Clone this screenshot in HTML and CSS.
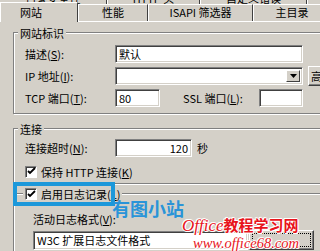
FILE: index.html
```html
<!DOCTYPE html>
<html lang="zh-CN">
<head>
  <meta charset="UTF-8" />
  <title>网站属性</title>
  <link rel="stylesheet" href="styles.css">
</head>
<body>
  <div class="dialog">
    <div class="tabs-back">
      <div class="btab btab-dir">目录安全性</div>
      <div class="btab btab-http">HTTP 头</div>
      <div class="btab btab-err">自定义错误</div>
      <div class="btab btab-more"></div>
    </div>
    <div class="tabs">
      <div class="tab tab-site active">网站</div>
      <div class="tab tab-perf">性能</div>
      <div class="tab tab-isapi">ISAPI 筛选器</div>
      <div class="tab tab-home">主目录</div>
    </div>

    <div class="panel">
      <section class="group group-site">
        <div class="group-title">网站标识</div>
        <div class="rows">
          <div class="row">
            <span class="lbl">描述(<u>S</u>):</span>
            <div class="field field-desc">默认</div>
          </div>
          <div class="row">
            <span class="lbl">IP 地址(<u>I</u>):</span>
            <div class="field field-ip">
              <span class="drop"><svg width="7" height="4" viewBox="0 0 7 4"><path d="M0 0h7L3.5 4z" fill="#000"/></svg></span>
            </div>
            <div class="btn btn-adv">高级(<u>D</u>)...</div>
          </div>
          <div class="row">
            <span class="lbl">TCP 端口(<u>T</u>):</span>
            <div class="field field-tcp">80</div>
            <span class="lbl lbl-ssl">SSL 端口(<u>L</u>):</span>
            <div class="field field-ssl"></div>
          </div>
        </div>
      </section>

      <section class="group group-conn">
        <div class="group-title">连接</div>
        <div class="row">
          <span class="lbl">连接超时(<u>N</u>):</span>
          <div class="field field-timeout">120</div>
          <span class="unit">秒</span>
        </div>
        <div class="row row-check">
          <span class="check"><svg width="9" height="9" viewBox="0 0 9 9"><path d="M1 4l2 2 5-5" fill="none" stroke="#000" stroke-width="1.8"/></svg></span>
          <span>保持 HTTP 连接(<u>K</u>)</span>
        </div>
      </section>

      <section class="group group-log">
        <div class="group-title title-check">
          <span class="check"><svg width="9" height="9" viewBox="0 0 9 9"><path d="M1 4l2 2 5-5" fill="none" stroke="#000" stroke-width="1.8"/></svg></span>
          <span>启用日志记录(<u>L</u>)</span>
        </div>
        <div class="log-label">活动日志格式(<u>V</u>):</div>
        <div class="row row-log">
          <div class="field field-log">W3C 扩展日志文件格式</div>
          <div class="btn btn-prop focus">属性(<u>P</u>)...</div>
        </div>
      </section>
    </div>

    <div class="mark-box"></div>
    <div class="mark-text">有图小站</div>
    <div class="watermark">
      <div class="wm-line1"><span class="wm-en">Office</span><span class="wm-cn">教程学习网</span></div>
      <div class="wm-line2">www.office68.com</div>
    </div>
  </div>
</body>
</html>
```

FILE: styles.css
```css
html, body {
  margin: 0;
  overflow: hidden;
}
body {
  background: #d4d0c8;
  font: 11px/12px "Noto Sans CJK SC", sans-serif;
  color: #000;
}
u {
  text-decoration: underline;
}
.dialog {
  position: relative;
  width: 380px;
  height: 251px;
}

/* back row of tabs, mostly hidden */
.tabs-back {
  display: flex;
  align-items: flex-end;
  height: 4px;
  overflow: hidden;
}
.btab {
  flex: none;
  height: 12px;
  box-sizing: border-box;
  border-right: 1px solid #404040;
  text-align: center;
}
.btab-dir { width: 107px; }
.btab-http { width: 93px; border-left: 1px solid #fff; }
.btab-err { width: 107px; border-left: 1px solid #fff; }
.btab-more { width: 60px; border-left: 1px solid #fff; }

/* front row */
.tabs {
  display: flex;
  align-items: flex-start;
  height: 17px;
}
.tab {
  flex: none;
  height: 17px;
  box-sizing: border-box;
  border-top: 1px solid #fff;
  border-left: 1px solid #fff;
  border-right: 1px solid #404040;
  line-height: 15px;
  text-align: center;
}
.tab.active {
  position: relative;
  z-index: 1;
  height: 20px;
  margin-top: -2px;
  background: #d4d0c8;
  line-height: 19px;
  text-align: left;
  padding-left: 19px;
}
.tab-site { width: 78px; }
.tab-perf { width: 70px; }
.tab-isapi { width: 105px; }
.tab-home { width: 78px; }

.panel {
  border-top: 1px solid #fff;
  padding: 4px 0 0 13px;
}

/* group boxes */
.group {
  box-sizing: border-box;
  width: 330px;
  border: 1px solid #808080;
  box-shadow: inset 1px 1px #fff, 1px 1px #fff;
}
.group-title {
  width: fit-content;
  margin-top: -6px;
  padding: 0 2px;
  background: #d4d0c8;
}
.group-site {
  margin-top: 6px;
  padding: 0 0 6px 11px;
}
.group-site .group-title { margin-left: -7px; }
.group-conn {
  margin-top: 14px;
  padding: 0 0 5px 11px;
}
.group-conn .group-title { margin-left: -7px; margin-bottom: 4px; }
.group-log {
  margin-top: 9px;
  padding: 0 0 20px 19px;
}
.group-log .group-title { margin-left: -10px; }

.rows {
  display: flex;
  flex-direction: column;
  gap: 4px;
  margin-top: 6px;
}
.row {
  display: flex;
  align-items: center;
  height: 18px;
}
.lbl {
  flex: none;
  width: 90px;
}
.lbl-ssl {
  width: 76px;
  margin-left: 23px;
}

/* sunken edit fields */
.field {
  flex: none;
  box-sizing: border-box;
  height: 18px;
  background: #fff;
  border: 1px solid;
  border-color: #808080 #fff #fff #808080;
  box-shadow: inset 1px 1px #404040, inset -1px -1px #d4d0c8;
  padding: 0 3px;
  line-height: 16px;
  white-space: nowrap;
}
.field-desc { width: 188px; }
.field-ip {
  width: 188px;
  display: flex;
  justify-content: flex-end;
  padding: 2px;
}
.drop {
  width: 14px;
  height: 12px;
  box-sizing: border-box;
  display: flex;
  align-items: center;
  justify-content: center;
  background: #d4d0c8;
  border: 1px solid;
  border-color: #fff #404040 #404040 #fff;
}
.field-tcp { width: 45px; }
.field-ssl { width: 44px; }
.field-timeout {
  width: 77px;
  text-align: right;
}
.unit { margin-left: 5px; }

.btn {
  flex: none;
  box-sizing: border-box;
  height: 20px;
  background: #d4d0c8;
  border: 1px solid;
  border-color: #fff #404040 #404040 #fff;
  box-shadow: inset -1px -1px #808080;
  text-align: center;
  line-height: 18px;
}
.btn-adv {
  width: 75px;
  margin-left: 5px;
  padding-left: 2px;
  text-align: left;
}
.btn-prop {
  width: 65px;
  margin-left: 1px;
  color: #d4d0c8;
}
.btn.focus {
  outline: 1px dotted #000;
  outline-offset: -4px;
}

/* checkboxes */
.check {
  flex: none;
  width: 12px;
  height: 12px;
  box-sizing: border-box;
  display: inline-flex;
  align-items: center;
  justify-content: center;
  background: #fff;
  border: 1px solid;
  border-color: #808080 #fff #fff #808080;
  box-shadow: inset 1px 1px #404040;
  margin-right: 4px;
}
.row-check {
  height: 13px;
  margin-top: 8px;
}
.title-check {
  display: flex;
  align-items: center;
}

.log-label {
  margin-top: 13px;
}
.row-log {
  margin-top: 5px;
  height: 20px;
}
.field-log {
  width: 215px;
  height: 19px;
}

/* overlays added on the screenshot */
.mark-box {
  position: absolute;
  left: 13px;
  top: 182px;
  width: 102px;
  height: 24px;
  box-sizing: border-box;
  border: 4px solid #1c98da;
}
.mark-text {
  position: absolute;
  left: 112px;
  top: 198px;
  font: bold 18px/20px "Noto Sans CJK SC", sans-serif;
  color: #2a94d8;
}
.watermark {
  position: absolute;
  left: 182px;
  top: 214px;
  color: #e8141c;
  text-shadow: 1px 0 #fff, -1px 0 #fff, 0 1px #fff, 0 -1px #fff, 1px 1px #fff, -1px -1px #fff;
}
.wm-line1 {
  white-space: nowrap;
  line-height: 17px;
}
.wm-en {
  font: italic 17px "Liberation Serif", serif;
}
.wm-cn {
  font: bold 15px "Noto Sans CJK SC", sans-serif;
}
.wm-line2 {
  margin-left: 11px;
  font: italic 14.5px/15px "Liberation Serif", serif;
  white-space: nowrap;
}
```
